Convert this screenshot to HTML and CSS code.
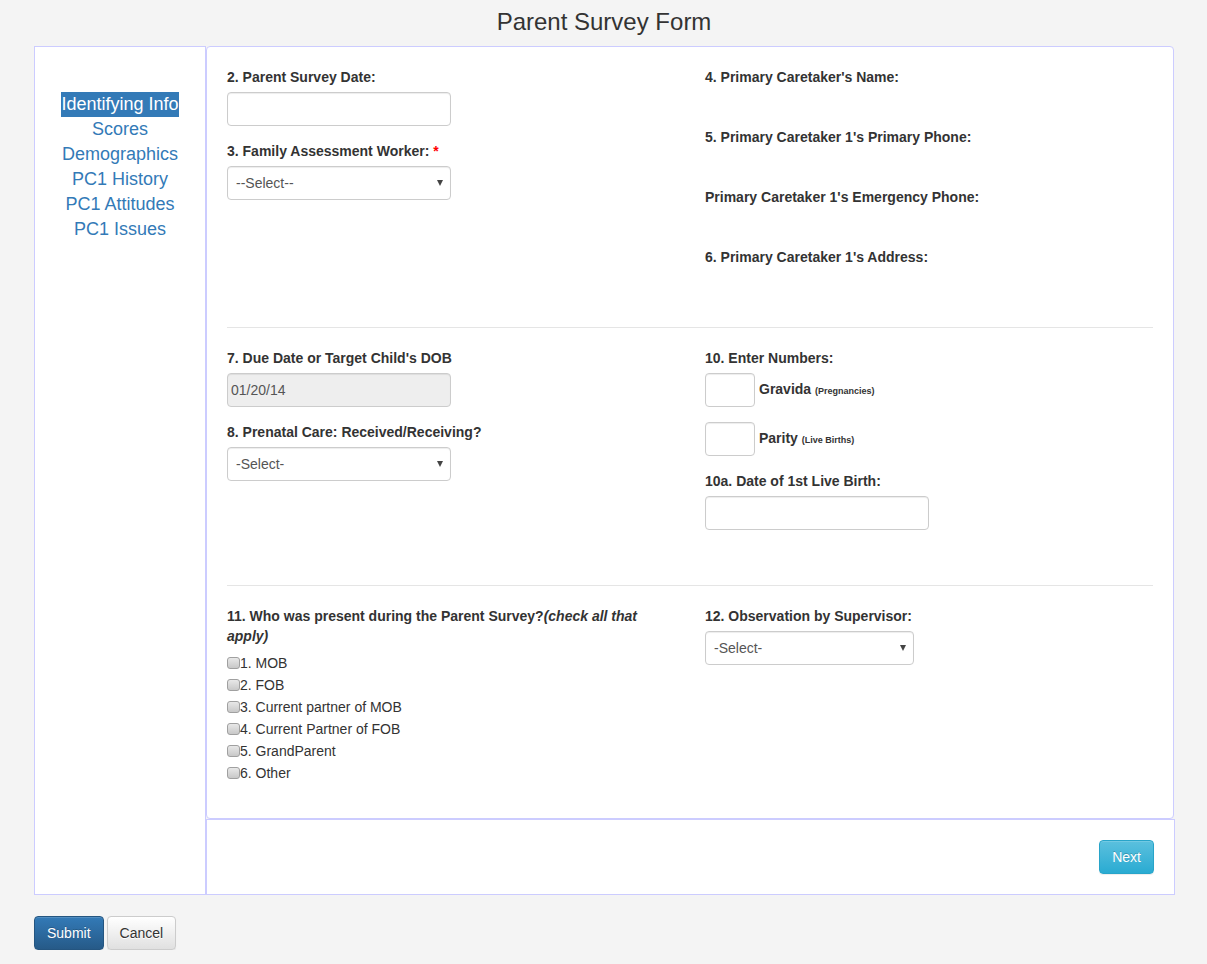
FILE: index.html
```html
<!DOCTYPE html>
<html>
<head>
<meta charset="utf-8">
<title>Parent Survey Form</title>
<link rel="stylesheet" href="styles.css">
</head>
<body>
<div class="container">
  <h1 class="title">Parent Survey Form</h1>
  <div class="layout">
    <nav class="sidebar">
      <div class="nav-item"><a class="nav-link active" href="#">Identifying Info</a></div>
      <div class="nav-item"><a class="nav-link" href="#">Scores</a></div>
      <div class="nav-item"><a class="nav-link" href="#">Demographics</a></div>
      <div class="nav-item"><a class="nav-link" href="#">PC1 History</a></div>
      <div class="nav-item"><a class="nav-link" href="#">PC1 Attitudes</a></div>
      <div class="nav-item"><a class="nav-link" href="#">PC1 Issues</a></div>
    </nav>
    <div class="main">
      <div class="panel">
        <div class="row">
          <div class="col">
            <div class="group">
              <label class="lbl">2. Parent Survey Date:</label>
              <input class="field" type="text">
            </div>
            <div class="group">
              <label class="lbl">3. Family Assessment Worker: <span class="req">*</span></label>
              <span class="select-wrap"><select class="field sel"><option>--Select--</option></select></span>
            </div>
          </div>
          <div class="col">
            <div class="group">
              <label class="lbl">4. Primary Caretaker's Name:</label>
              <div class="value"></div>
            </div>
            <div class="group">
              <label class="lbl">5. Primary Caretaker 1's Primary Phone:</label>
              <div class="value"></div>
            </div>
            <div class="group">
              <label class="lbl">Primary Caretaker 1's Emergency Phone:</label>
              <div class="value"></div>
            </div>
            <div class="group">
              <label class="lbl">6. Primary Caretaker 1's Address:</label>
              <div class="value"></div>
            </div>
          </div>
        </div>
        <hr class="divider">
        <div class="row row-extra">
          <div class="col">
            <div class="group">
              <label class="lbl">7. Due Date or Target Child's DOB</label>
              <input class="field field-disabled" type="text" value="01/20/14" disabled>
            </div>
            <div class="group">
              <label class="lbl">8. Prenatal Care: Received/Receiving?</label>
              <span class="select-wrap"><select class="field sel"><option>-Select-</option></select></span>
            </div>
          </div>
          <div class="col">
            <div class="group">
              <label class="lbl">10. Enter Numbers:</label>
              <div class="num-row"><input class="field num" type="text"> <span class="num-lbl">Gravida <small class="tiny">(Pregnancies)</small></span></div>
              <div class="num-row"><input class="field num" type="text"> <span class="num-lbl">Parity <small class="tiny">(Live Births)</small></span></div>
            </div>
            <div class="group">
              <label class="lbl">10a. Date of 1st Live Birth:</label>
              <input class="field" type="text">
            </div>
          </div>
        </div>
        <hr class="divider">
        <div class="row">
          <div class="col">
            <div class="group">
              <label class="lbl lbl-checks">11. Who was present during the Parent Survey?<em>(check all that apply)</em></label>
              <div class="checks">
                <label class="check"><input type="checkbox" class="cb">1. MOB</label>
                <label class="check"><input type="checkbox" class="cb">2. FOB</label>
                <label class="check"><input type="checkbox" class="cb">3. Current partner of MOB</label>
                <label class="check"><input type="checkbox" class="cb">4. Current Partner of FOB</label>
                <label class="check"><input type="checkbox" class="cb">5. GrandParent</label>
                <label class="check"><input type="checkbox" class="cb">6. Other</label>
              </div>
            </div>
          </div>
          <div class="col">
            <div class="group">
              <label class="lbl">12. Observation by Supervisor:</label>
              <span class="select-wrap"><select class="field sel sel-narrow"><option>-Select-</option></select></span>
            </div>
          </div>
        </div>
      </div>
      <div class="panel-footer">
        <button class="btn btn-info" type="button">Next</button>
      </div>
    </div>
  </div>
  <div class="actions">
    <button class="btn btn-primary" type="button">Submit</button>
    <button class="btn btn-default" type="button">Cancel</button>
  </div>
</div>
</body>
</html>
```
FILE: styles.css
```css
* { box-sizing: border-box; }

body {
  margin: 0;
  background: #f4f4f4;
  font-family: "Liberation Sans", Arial, Helvetica, sans-serif;
  font-size: 14px;
  line-height: 20px;
  color: #333;
}

.container {
  width: 1140px;
  margin: 0 0 0 34px;
}

.title {
  margin: 0;
  padding: 9px 0 11px;
  font-size: 24px;
  line-height: 26px;
  font-weight: normal;
  text-align: center;
  color: #333;
}

.layout {
  display: flex;
}

.sidebar {
  width: 172px;
  flex: none;
  background: #fff;
  border: 1px solid #ccf;
  padding-top: 45px;
  text-align: center;
}

.nav-item {
  height: 25px;
}

.nav-link {
  display: inline-block;
  font-size: 18px;
  line-height: 25px;
  color: #337ab7;
  text-decoration: none;
}

.nav-link.active {
  background: #337ab7;
  color: #fff;
}

.main {
  flex: 1;
  display: flex;
  flex-direction: column;
}

.panel {
  background: #fff;
  border: 1px solid #ccf;
  border-radius: 4px;
  padding: 20px 20px 19px;
}

.row {
  display: grid;
  grid-template-columns: 448px 448px;
  column-gap: 30px;
  align-items: start;
}

.row-extra {
  padding-bottom: 20px;
}

.group {
  margin-bottom: 15px;
}

.lbl {
  display: block;
  font-weight: bold;
  margin-bottom: 5px;
}

.lbl-checks {
  margin-bottom: 6px;
}

.req {
  color: #f00;
}

.value {
  height: 20px;
}

.field {
  display: block;
  width: 224px;
  height: 34px;
  margin: 0;
  padding: 0 3px;
  border: 1px solid #ccc;
  border-radius: 4px;
  background: #fff;
  box-shadow: inset 0 1px 1px rgba(0, 0, 0, 0.075);
  font-family: inherit;
  font-size: 14px;
  color: #555;
}

.field-disabled {
  background: #eee;
  color: #555;
  opacity: 1;
}

.select-wrap {
  position: relative;
  display: inline-block;
  vertical-align: top;
}

.select-wrap::after {
  content: "";
  position: absolute;
  right: 8px;
  top: 14px;
  border-left: 3px solid transparent;
  border-right: 3px solid transparent;
  border-top: 6px solid #444;
  pointer-events: none;
}

.sel {
  -webkit-appearance: none;
  appearance: none;
  padding: 0 8px;
  box-shadow: inset 0 1px 1px rgba(0, 0, 0, 0.075);
}

.sel-narrow {
  width: 209px;
}

.num-row {
  display: flex;
  align-items: center;
  gap: 4px;
  margin-bottom: 15px;
}

.num-row:last-child {
  margin-bottom: 0;
}

.num {
  width: 50px;
}

.num-lbl {
  font-weight: bold;
}

.tiny {
  font-size: 9px;
  font-weight: bold;
}

.divider {
  margin: 20px 0 20px;
  border: 0;
  border-top: 1px solid #e5e5e5;
  height: 0;
}

.checks {
  display: flex;
  flex-direction: column;
}

.check {
  display: block;
  line-height: 22px;
  height: 22px;
}

.cb {
  -webkit-appearance: none;
  appearance: none;
  display: inline-block;
  width: 13px;
  height: 12px;
  margin: 0;
  vertical-align: -1px;
  border: 1px solid #a0a0a0;
  border-radius: 3px;
  background: linear-gradient(to bottom, #e8e8e8, #c8c8c8);
}

.panel-footer {
  background: #fff;
  border: 1px solid #ccf;
  margin-right: -1px;
  padding: 20px 20px;
  text-align: right;
}

.btn {
  display: inline-block;
  height: 34px;
  padding: 6px 12px;
  font-family: inherit;
  font-size: 14px;
  line-height: 20px;
  border: 1px solid transparent;
  border-radius: 4px;
  cursor: pointer;
  vertical-align: top;
}

.btn-info {
  color: #fff;
  background: linear-gradient(to bottom, #5bc0de 0, #2aabd2 100%);
  border-color: #28a4c9;
  text-shadow: 0 -1px 0 rgba(0, 0, 0, 0.2);
  box-shadow: inset 0 1px 0 rgba(255, 255, 255, 0.15), 0 1px 1px rgba(0, 0, 0, 0.075);
}

.btn-primary {
  color: #fff;
  background: linear-gradient(to bottom, #337ab7 0, #265a88 100%);
  border-color: #245580;
  text-shadow: 0 -1px 0 rgba(0, 0, 0, 0.2);
  box-shadow: inset 0 1px 0 rgba(255, 255, 255, 0.15), 0 1px 1px rgba(0, 0, 0, 0.075);
}

.btn-default {
  color: #333;
  background: linear-gradient(to bottom, #fff 0, #e0e0e0 100%);
  border-color: #ccc;
  text-shadow: 0 1px 0 #fff;
  box-shadow: inset 0 1px 0 rgba(255, 255, 255, 0.15), 0 1px 1px rgba(0, 0, 0, 0.075);
}

.actions {
  display: flex;
  gap: 3px;
  margin-top: 21px;
}
```
